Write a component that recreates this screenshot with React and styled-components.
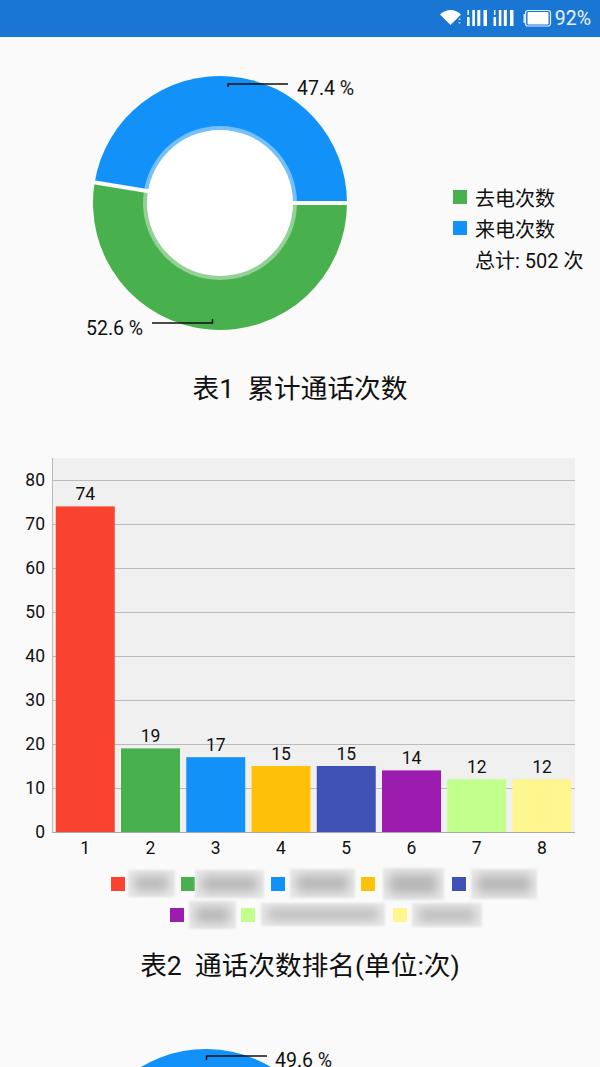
import React from "react";
import styled, { createGlobalStyle } from "styled-components";

const Global = createGlobalStyle`
  html, body { margin: 0; padding: 0; background: #fafafa; }
  body { font-family: Roboto, "Noto Sans CJK SC", sans-serif; color: #111; }
`;

const Page = styled.div`
  width: 600px;
  height: 1067px;
  overflow: hidden;
  background: #fafafa;
`;

const StatusBar = styled.header`
  height: 37px;
  background: #1976d2;
  display: flex;
  align-items: center;
  justify-content: flex-end;
  padding-right: 9px;
  box-sizing: border-box;
  color: #fff;
`;

const StatusIcons = styled.svg`
  display: block;
  width: 113px;
  height: 37px;
`;

const StatusText = styled.span`
  font: 19.5px Roboto, sans-serif;
  margin-left: 2px;
  color: #eaf3fc;
`;

const DonutRow = styled.section`
  display: flex;
  align-items: flex-start;
  height: 329px;
`;

const ChartSvg = styled.svg`
  display: block;
  flex: none;
`;

const SideLegend = styled.div`
  margin: 148px 0 0 13px;
  display: flex;
  flex-direction: column;
  gap: 7px;
`;

const SideRow = styled.div`
  display: flex;
  align-items: center;
  height: 24px;
  font: 20px "Noto Sans CJK SC", sans-serif;
  white-space: nowrap;
`;

const SideSwatch = styled.i`
  width: 14px;
  height: 14px;
  margin-right: 8px;
  background: ${(p) => p.$color};
`;

const SideTotal = styled(SideRow)`
  padding-left: 22px;
  font: 20px Roboto, "Noto Sans CJK SC", sans-serif;
`;

const Title = styled.h2`
  margin: 0;
  font: 400 26.67px/46px Roboto, "Noto Sans CJK SC", sans-serif;
  white-space: pre;
  text-align: center;
`;

const BarSection = styled.section`
  margin-top: 46px;
`;

const BlurLegend = styled.div`
  margin-top: 5px;
  padding-left: 48px;
  display: flex;
  flex-direction: column;
`;

const BlurRow = styled.div`
  display: flex;
  justify-content: center;
  align-items: center;
  height: 31px;
  padding-left: ${(p) => p.$shift}px;
`;

const Swatch = styled.i`
  flex: none;
  width: 14px;
  height: 14px;
  background: ${(p) => p.$color};
`;

const Redacted = styled.span`
  flex: none;
  position: relative;
  overflow: hidden;
  width: ${(p) => p.$w}px;
  height: ${(p) => p.$h}px;
  margin-left: ${(p) => p.$before}px;
  margin-right: ${(p) => p.$after}px;
  background: #ebebeb;
  filter: blur(0.8px);
  &::after {
    content: "";
    position: absolute;
    inset: 6px 6px;
    background: #b4b4b4;
    filter: blur(6px);
  }
`;

const BarTitle = styled(Title)`
  margin-top: 13px;
`;

const Third = styled.section`
  margin-top: 41px;
`;

const Label = styled.text`
  font: 19.5px Roboto, sans-serif;
  fill: #111;
`;

const Tick = styled.text`
  font: 17.5px Roboto, sans-serif;
  fill: #111;
  text-anchor: ${(p) => p.$anchor || "middle"};
`;

const BG = "#fafafa";
const GREEN = "#48b04c";
const BLUE = "#1291f8";

function pt(cx, cy, r, deg) {
  const a = (deg * Math.PI) / 180;
  return [cx + r * Math.cos(a), cy + r * Math.sin(a)];
}

function sector(cx, cy, r, a0, a1) {
  const [x0, y0] = pt(cx, cy, r, a0);
  const [x1, y1] = pt(cx, cy, r, a1);
  const large = a1 - a0 > 180 ? 1 : 0;
  return `M${cx} ${cy}L${x0} ${y0}A${r} ${r} 0 ${large} 1 ${x1} ${y1}Z`;
}

function Donut({ cx, cy, greenPct }) {
  const split = (greenPct / 100) * 360;
  const [gx, gy] = pt(cx, cy, 128, split);
  return (
    <g>
      <path d={sector(cx, cy, 127, 0, split)} fill={GREEN} />
      <path d={sector(cx, cy, 127, split, 360)} fill={BLUE} />
      <circle cx={cx} cy={cy} r={77} fill="#fff" fillOpacity="0.42" />
      <line x1={cx} y1={cy} x2={cx + 128} y2={cy} stroke={BG} strokeWidth="4" />
      <line x1={cx} y1={cy} x2={gx} y2={gy} stroke={BG} strokeWidth="4" />
      <circle cx={cx} cy={cy} r={73} fill="#fff" />
    </g>
  );
}

const bars = [
  [74, "#fa432e"],
  [19, GREEN],
  [17, BLUE],
  [15, "#ffc107"],
  [15, "#3f51b5"],
  [14, "#9c1cb0"],
  [12, "#c2ff8c"],
  [12, "#fff68f"],
];

const legendRows = [
  [
    ["#fa432e", 3, 47, 27, 6],
    [GREEN, 0, 69, 28, 7],
    [BLUE, 5, 65, 29, 6.5],
    ["#ffc107", 8, 61, 32, 8],
    ["#3f51b5", 5, 66, 30, 0],
  ],
  [
    ["#9c1cb0", 5, 47, 28, 5],
    ["#c2ff8c", 6, 124, 23, 8],
    ["#fff68f", 5, 70, 24, 0],
  ],
];

function BarChart() {
  const y = (v) => 832 - v * 4.4;
  const x = (i) => 85.25 + i * 65.25;
  return (
    <ChartSvg width="600" height="405" viewBox="0 458 600 405">
      <rect x="52" y="458" width="523" height="374" fill="#f0f0f0" />
      {[10, 20, 30, 40, 50, 60, 70, 80].map((v) => (
        <line
          key={v}
          x1="52"
          x2="575"
          y1={Math.floor(y(v)) + 0.5}
          y2={Math.floor(y(v)) + 0.5}
          stroke="#bbbbbb"
          strokeWidth="1"
        />
      ))}
      <line x1="52.500" x2="52.500" y1="458" y2="832" stroke="#bbbbbb" strokeWidth="1" />
      <line x1="52" x2="575" y1="832.500" y2="832.500" stroke="#a8a8a8" strokeWidth="1" />
      {[0, 10, 20, 30, 40, 50, 60, 70, 80].map((v) => (
        <Tick key={v} x="45" y={y(v) + 6} $anchor="end">{v}</Tick>
      ))}
      {bars.map(([v, c], i) => (
        <g key={i}>
          <rect x={x(i) - 29.5} y={y(v)} width="59" height={v * 4.4} fill={c} />
          <Tick x={x(i)} y={y(v) - 6.5}>{v}</Tick>
          <Tick x={x(i)} y="854">{i + 1}</Tick>
        </g>
      ))}
    </ChartSvg>
  );
}

export default function App() {
  return (
    <Page>
      <Global />
      <StatusBar>
        <StatusIcons viewBox="440 0 113 37">
          <path d="M440 14.500C446 8.500 455 8.500 461 14.500L450.500 25Z" fill="#fff" />
          <path d="M459.500 18l1.500 2h-3zM459.500 24l1.500-2h-3z" fill="#a9cdf0" />
          {[0, 26.5].map((dx) => (
            <g key={dx} fill="#fff">
              <rect x={467 + dx} y="17" width="2.6" height="9" />
              <rect x={467.500 + dx} y="10" width="1.4" height="5" />
              <rect x={472.300 + dx} y="10" width="2.6" height="16" />
              <rect x={477.300 + dx} y="10" width="3" height="16" />
              <rect x={483.500 + dx} y="10" width="3.5" height="16" />
            </g>
          ))}
          <rect x="523.500" y="14" width="2" height="9" fill="#d5e6f7" />
          <rect x="525.500" y="10.500" width="25" height="15.500" rx="2.500" fill="#1976d2" stroke="#e4effa" strokeWidth="1.200" />
          <rect x="527.500" y="12" width="21" height="12.500" rx="1" fill="#fff" />
        </StatusIcons>
        <StatusText>92%</StatusText>
      </StatusBar>

      <DonutRow>
        <ChartSvg width="440" height="329" viewBox="0 37 440 329">
          <Donut cx={220} cy={203} greenPct={52.6} />
          <path d="M228 87V84H288" fill="none" stroke="#111" strokeWidth="1.500" />
          <path d="M212.500 319V323H152" fill="none" stroke="#111" strokeWidth="1.500" />
          <Label x="297" y="95">47.4 %</Label>
          <Label x="86" y="335">52.6 %</Label>
        </ChartSvg>
        <SideLegend>
          <SideRow><SideSwatch $color={GREEN} />去电次数</SideRow>
          <SideRow><SideSwatch $color={BLUE} />来电次数</SideRow>
          <SideTotal>总计: 502 次</SideTotal>
        </SideLegend>
      </DonutRow>
      <Title>{"表1  累计通话次数"}</Title>

      <BarSection>
        <BarChart />
        <BlurLegend>
          {legendRows.map((row, r) => (
            <BlurRow key={r} $shift={r * 3}>
              {row.map(([c, before, w, h, after], i) => (
                <React.Fragment key={i}>
                  <Swatch $color={c} />
                  <Redacted $before={before} $w={w} $h={h} $after={after} />
                </React.Fragment>
              ))}
            </BlurRow>
          ))}
        </BlurLegend>
        <BarTitle>{"表2  通话次数排名(单位:次)"}</BarTitle>
      </BarSection>

      <Third>
        <ChartSvg width="440" height="70" viewBox="0 1030 440 70">
          <Donut cx={206} cy={1176} greenPct={50.4} />
          <path d="M206.500 1060V1056H267" fill="none" stroke="#111" strokeWidth="1.500" />
          <Label x="275" y="1067">49.6 %</Label>
        </ChartSvg>
      </Third>
    </Page>
  );
}
